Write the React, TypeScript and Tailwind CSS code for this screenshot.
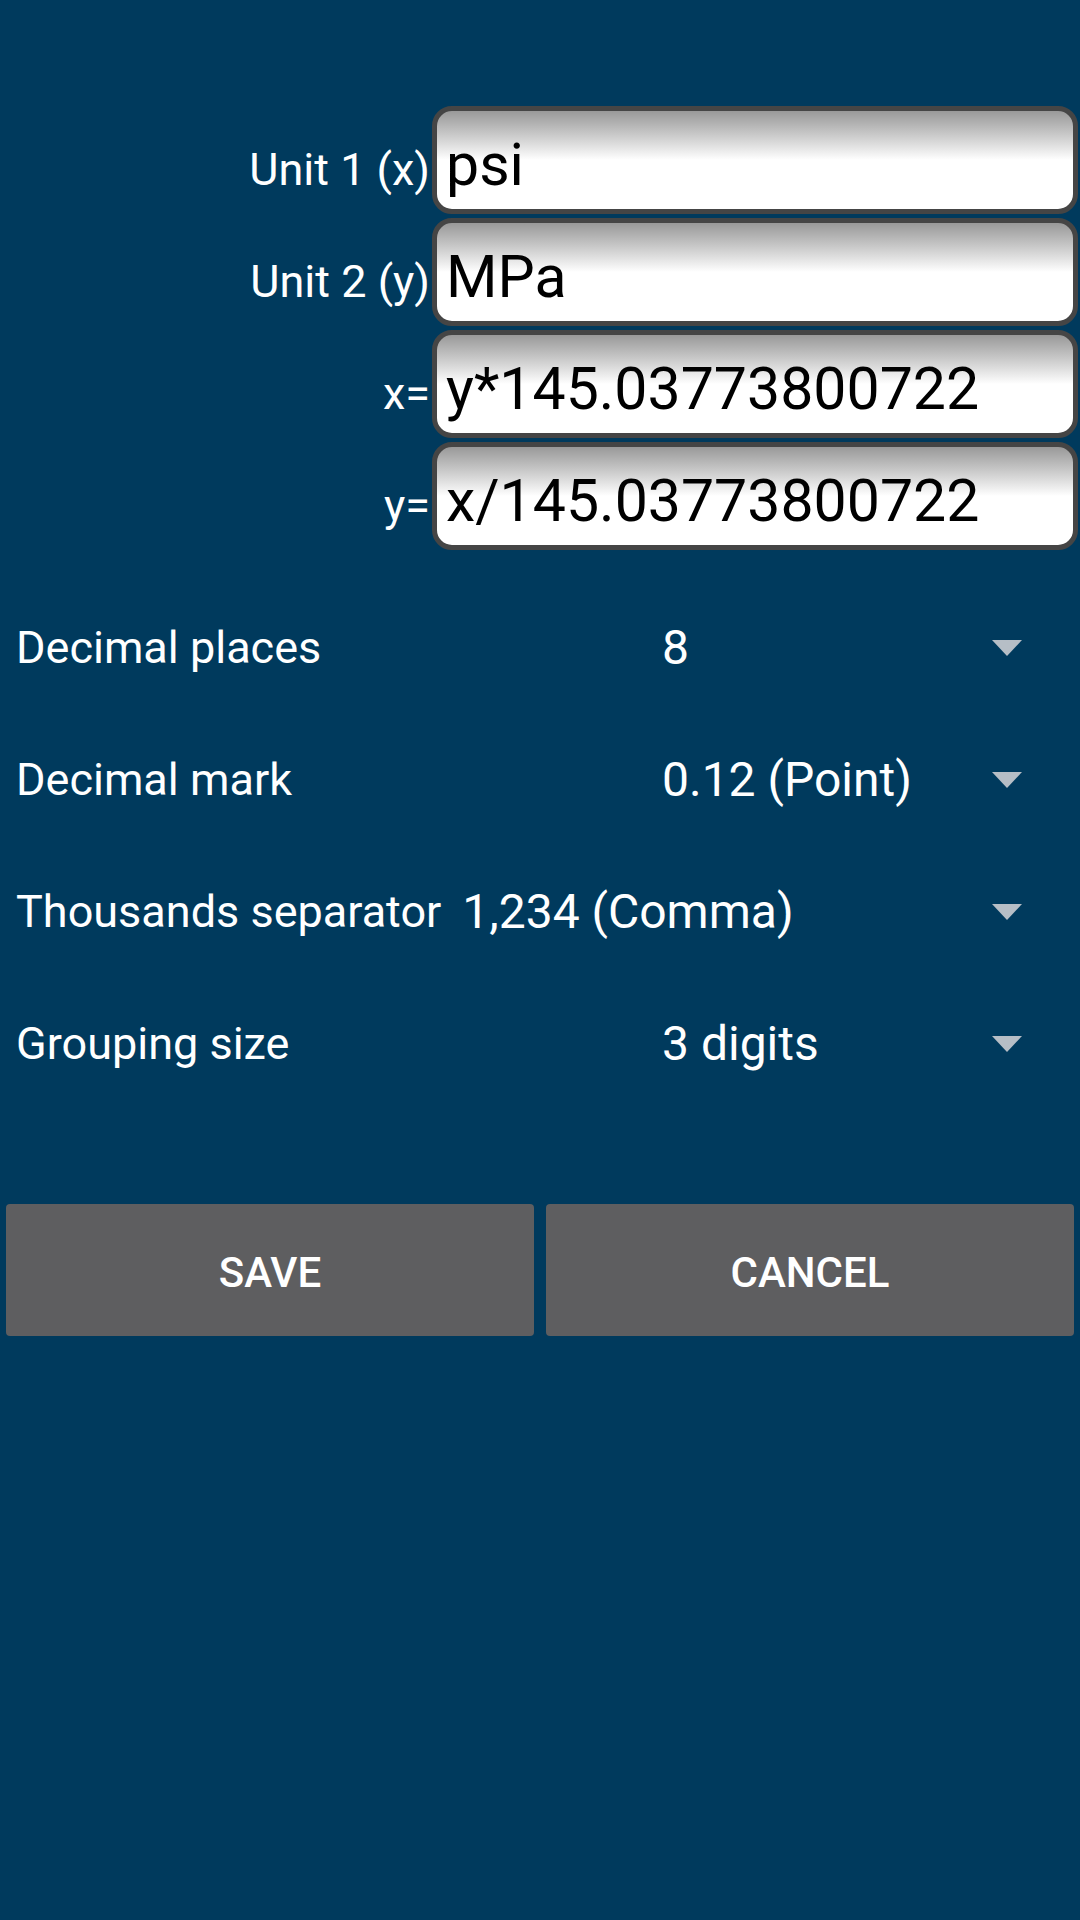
import React from "react";

const fields = [
  { label: "Unit 1 (x)", value: "psi" },
  { label: "Unit 2 (y)", value: "MPa" },
  { label: "x=", value: "y*145.03773800722" },
  { label: "y=", value: "x/145.03773800722" },
];

const spinners = [
  { label: "Decimal places", value: "8", wide: false },
  { label: "Decimal mark", value: "0.12 (Point)", wide: false },
  { label: "Thousands separator", value: "1,234 (Comma)", wide: true },
  { label: "Grouping size", value: "3 digits", wide: false },
];

function Arrow() {
  return (
    <svg width="30" height="16" viewBox="0 0 30 16" className="shrink-0">
      <polygon points="0,0 30,0 15,16" fill="#b6bec6" />
    </svg>
  );
}

export default function App() {
  return (
    <div className="w-[1080px] min-h-[1920px] bg-[#003a5d] font-['Roboto','Liberation_Sans',sans-serif] text-white">
      <div className="pt-[106px] flex flex-col gap-[4px]">
        {fields.map((f) => (
          <div key={f.label} className="flex items-baseline">
            <div className="w-[432px] pr-[2px] text-right text-[45px] leading-none whitespace-nowrap">
              {f.label}
            </div>
            <div className="flex-1 mr-[2px] h-[108px] rounded-[20px] border-[5px] border-[#454545] bg-gradient-to-b from-[#999999] via-white via-50% to-white flex items-center pl-[9px] pt-[8px] text-black text-[59px] leading-none whitespace-nowrap overflow-hidden">
              {f.value}
            </div>
          </div>
        ))}
      </div>

      <div className="mt-[32px] flex flex-col">
        {spinners.map((s) => (
          <div key={s.label} className="h-[132px] flex items-center pl-[16px]">
            <div
              className={
                s.wide
                  ? "shrink-0 whitespace-nowrap text-[45px]"
                  : "min-w-[625px] shrink-0 whitespace-nowrap text-[45px]"
              }
            >
              {s.label}
            </div>
            <div className="flex-1 flex items-center pl-[21px] pr-[58px]">
              <div className="flex-1 whitespace-nowrap text-[48px]">{s.value}</div>
              <Arrow />
            </div>
          </div>
        ))}
      </div>

      <div className="mt-[94px] flex gap-[12px] px-[6px]">
        <button className="flex-1 h-[132px] rounded-[4px] bg-[#5e5e60] text-white text-[42px] font-medium uppercase pt-[4px]">
          Save
        </button>
        <button className="flex-1 h-[132px] rounded-[4px] bg-[#5e5e60] text-white text-[42px] font-medium uppercase pt-[4px]">
          Cancel
        </button>
      </div>
    </div>
  );
}
